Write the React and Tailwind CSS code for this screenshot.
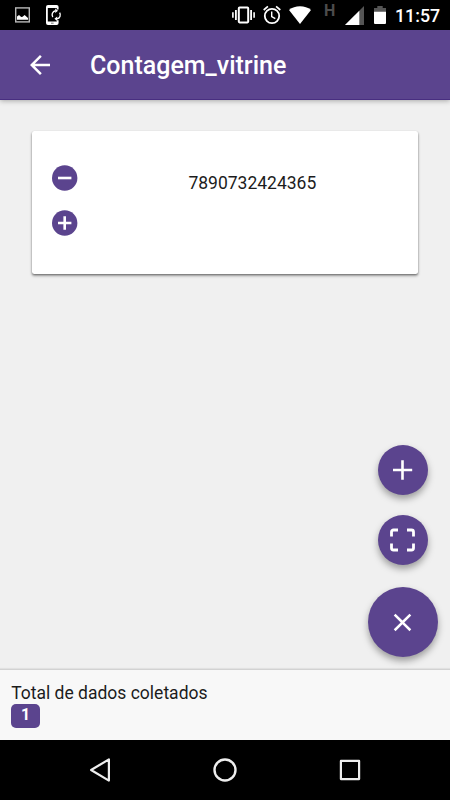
import React, { useState } from 'react';

const StatusBar = () => (
  <div className="h-[30px] shrink-0 bg-black flex items-start pl-[15px]">
    {/* Notifications */}
    <svg className="mt-[7px] w-[15px] h-4" viewBox="0 0 15 16" fill="none">
      <rect x="0.7" y="0.9" width="13.6" height="14" stroke="#b9b9b9" strokeWidth="1.4" />
      <path d="M2 12.7V9.5l2-1.4 2.2 2 1.4-.4 2-1.8L13 11v1.7z" fill="#fff" />
    </svg>
    <svg className="ml-4 mt-[5px] w-4 h-5" viewBox="0 0 16 20" fill="none">
      <path d="M2 0h8.6a2 2 0 0 1 2 2v2.6h-1.8V3H1.8v13.4h9V15.2h1.8V18a2 2 0 0 1-2 2H2a2 2 0 0 1-2-2V2a2 2 0 0 1 2-2z" fill="#fff" />
      <path d="M5 18.2h2.6" stroke="#555" strokeWidth="0.8" />
      <path d="M9.4 5.8a4 4 0 0 0-2.6 6.2M11 13.8a4 4 0 0 0 2.6-6.2" stroke="#fff" strokeWidth="1.4" />
      <path d="M9.2 3.6l2.8 2.2-2.8 2.2zM11.2 16l-2.8-2.2 2.8-2.2z" fill="#fff" />
    </svg>

    {/* System icons */}
    <svg className="ml-[170px] mt-[6px] w-6 h-[18px]" viewBox="0 0 24 18" fill="none" stroke="#fff">
      <rect x="6.8" y="1.6" width="9.4" height="14.8" rx="0.8" strokeWidth="2" />
      <path d="M3.9 4v10M19.1 4v10" strokeWidth="1.8" />
      <path d="M0.9 6.2v5.6M22.1 6.2v5.6" strokeWidth="1.6" />
    </svg>
    <svg className="ml-[7px] mt-[5px] w-[18px] h-5" viewBox="0 0 18 20" fill="none" stroke="#fff">
      <circle cx="9" cy="11" r="7.2" strokeWidth="1.8" />
      <path d="M0.7 5l4.2-3.6M17.3 5l-4.2-3.6" strokeWidth="1.7" />
      <path d="M8.7 6.6v4.9l3.6 2.2" strokeWidth="1.4" />
    </svg>
    <svg className="ml-2 mt-[6px] w-[22px] h-[18px]" viewBox="0 0 22 18" fill="#fff">
      <path d="M0 3.9C3 1.6 6.8 0.3 11 0.3s8 1.3 11 3.6L11 18z" />
    </svg>
    <span className="ml-[13px] mt-[2px] w-3 text-[16px] leading-[18px] font-bold text-[#4c4c4c]">H</span>
    <svg className="ml-[9px] mt-[6px] w-[19px] h-[19px]" viewBox="0 0 19 19">
      <path d="M0 19L19 0v19z" fill="#555" />
      <path d="M0 19L14.3 4.7V19z" fill="#fff" />
    </svg>
    <svg className="ml-[10px] mt-[6px] w-3 h-[18px]" viewBox="0 0 12 18">
      <path d="M0 2h3.3V0h5.4v2H12v4H0z" fill="#555" />
      <path d="M0 5.7h12V17a1 1 0 0 1-1 1H1a1 1 0 0 1-1-1z" fill="#fff" />
    </svg>
    <span className="ml-[9px] mt-[5px] text-[17.8px] leading-[22px] font-medium text-white">11:57</span>
  </div>
);

const Header = ({ title }) => (
  <header className="h-[70px] shrink-0 bg-[#5b448e] border-b border-b-[#482e80] flex items-center pl-[25px] shadow-[0_1px_5px_rgba(0,0,0,0.3)] z-10">
    <button aria-label="Voltar">
      <svg className="w-[30px] h-[30px]" viewBox="0 0 24 24" fill="#fff">
        <path d="M20 11H7.83l5.59-5.59L12 4l-8 8 8 8 1.41-1.41L7.83 13H20v-2z" />
      </svg>
    </button>
    <h1 className="ml-[35px] pt-[2px] text-[25px] leading-[30px] font-medium text-white">{title}</h1>
  </header>
);

const CountButton = ({ label, d, onClick }) => (
  <button aria-label={label} onClick={onClick} className="w-[26px] h-[26px]">
    <svg className="w-[26px] h-[26px]" viewBox="0 0 26 26">
      <circle cx="12.7" cy="13" r="12.7" fill="#5b448e" />
      <path d={d} stroke="#fff" strokeWidth="2.6" />
    </svg>
  </button>
);

const NavigationBar = () => (
  <div className="h-[60px] shrink-0 bg-black flex items-center justify-between pl-[88px] pr-[88px]">
    <svg className="w-6 h-[26px]" viewBox="0 0 24 26" fill="none" stroke="#eee" strokeWidth="2.2" strokeLinejoin="round">
      <path d="M20.9 2.4v21.2L3.1 13z" />
    </svg>
    <svg className="w-6 h-6" viewBox="0 0 24 24" fill="none" stroke="#eee" strokeWidth="2.4">
      <circle cx="12" cy="12" r="10.5" />
    </svg>
    <svg className="w-6 h-6" viewBox="0 0 24 24" fill="none" stroke="#eee" strokeWidth="2.2" strokeLinejoin="round">
      <rect x="2.9" y="2.9" width="18.2" height="18.2" />
    </svg>
  </div>
);

const App = () => {
  const [total, setTotal] = useState(1);

  return (
    <div className="w-[450px] h-[800px] flex flex-col overflow-hidden bg-[#f0f0f0] font-['Roboto',sans-serif]">
      <StatusBar />
      <Header title="Contagem_vitrine" />

      <main className="relative flex-1 px-8 pt-[31px]">
        <div className="h-[142.5px] bg-white rounded-[2.5px] shadow-[0_2px_3px_rgba(0,0,0,0.3),0_1px_2px_rgba(0,0,0,0.35)] flex pl-5 pt-[34px]">
          <div className="flex flex-col gap-[19px]">
            <CountButton label="Diminuir" d="M6 13h13.4" onClick={() => setTotal(Math.max(0, total - 1))} />
            <CountButton label="Aumentar" d="M6 13h13.4M12.7 6.3v13.4" onClick={() => setTotal(total + 1)} />
          </div>
          <p className="ml-[110.4px] mt-[7px] text-[17.5px] leading-[22px] text-[#1c1c1c]">7890732424365</p>
        </div>

        {/* Floating action buttons */}
        <div className="absolute right-[12.5px] bottom-[11.7px] flex flex-col items-center">
          <button aria-label="Adicionar" className="w-[50px] h-[50px] rounded-full bg-[#5b448e] flex items-center justify-center shadow-[0_4px_7px_rgba(0,0,0,0.35)]">
            <svg className="w-5 h-5" viewBox="0.5 0 20 20" stroke="#fff" strokeWidth="2.6">
              <path d="M10 0.3v19.4M0.5 10h19.2" />
            </svg>
          </button>
          <button aria-label="Escanear" className="mt-5 w-[50px] h-[50px] rounded-full bg-[#5b448e] flex items-center justify-center shadow-[0_4px_7px_rgba(0,0,0,0.35)]">
            <svg className="w-[26px] h-6" viewBox="0.5 0 26 24" fill="none" stroke="#fff" strokeWidth="2.8">
              <path d="M2 8.5V4a2 2 0 0 1 2-2h4.5M17.5 2H22a2 2 0 0 1 2 2v4.5M24 15.5V20a2 2 0 0 1-2 2h-4.5M8.5 22H4a2 2 0 0 1-2-2v-4.5" />
            </svg>
          </button>
          <button aria-label="Fechar" className="mt-[22.5px] w-[70px] h-[70px] rounded-full bg-[#5b448e] flex items-center justify-center shadow-[0_4px_7px_rgba(0,0,0,0.35)]">
            <svg className="w-[30px] h-[30px]" viewBox="0.4 -0.3 24 24" fill="#fff">
              <path d="M19 6.41L17.59 5 12 10.59 6.41 5 5 6.41 10.59 12 5 17.59 6.41 19 12 13.41 17.59 19 19 17.59 13.41 12z" />
            </svg>
          </button>
        </div>
      </main>

      <footer className="h-[71px] shrink-0 bg-[#f8f8f8] border-t border-t-[#d2d2d2] shadow-[0_-1px_1px_rgba(0,0,0,0.06)] pl-[11.2px] pt-[12px]">
        <p className="text-[17.5px] leading-[22px] text-[#1c1c1c]">Total de dados coletados</p>
        <span className="flex w-[29px] h-6 items-center justify-center rounded-[5px] bg-[#5b448e] text-[16px] leading-none font-bold text-white pb-[2px]">{total}</span>
      </footer>
      <NavigationBar />
    </div>
  );
};

export default App;
